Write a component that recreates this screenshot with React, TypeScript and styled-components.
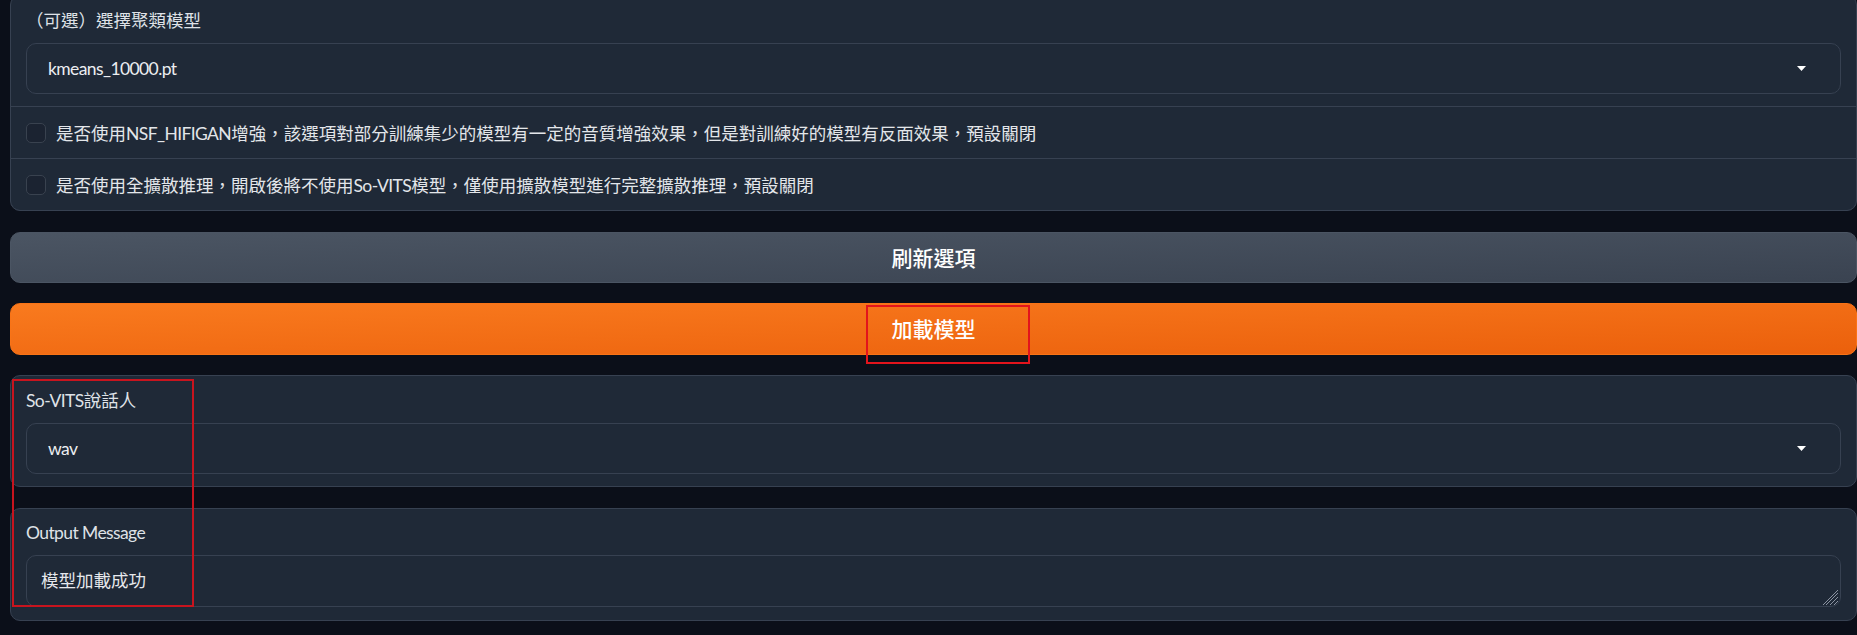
import React from "react";
import styled, { createGlobalStyle } from "styled-components";

const GlobalStyle = createGlobalStyle`
  html, body {
    margin: 0;
    padding: 0;
    background: #0b0f19;
    overflow: hidden;
  }
  body {
    font-family: "Lato", "Noto Sans CJK TC", "Noto Sans", sans-serif;
    color: #e5e7eb;
  }
  * { box-sizing: border-box; }
`;

const Page = styled.div`
  position: relative;
  display: flex;
  flex-direction: column;
  gap: 20.5px;
  margin-top: -5px;
  padding-left: 10px;
  width: 1857px;
  height: 650px;
`;

const Form = styled.div`
  display: flex;
  flex-direction: column;
  gap: 1px;
  background: #374151;
  border: 1px solid #374151;
  border-radius: 10px;
  overflow: hidden;
`;

const Block = styled.div<{ $bordered?: boolean }>`
  background: #1f2937;
  padding: 12.5px 15px;
  ${(p) =>
    p.$bordered
      ? `border: 1px solid #374151; border-radius: 10px;`
      : ``}
`;

const Latin = styled.span`
  letter-spacing: -0.6px;
`;

const Label = styled.div`
  font-size: 17.5px;
  line-height: 24px;
  color: #dfe2e7;
  margin-bottom: 10px;
  white-space: nowrap;
`;

const SelectBox = styled.div`
  display: flex;
  align-items: center;
  justify-content: space-between;
  height: 51px;
  padding: 0 34px 0 21px;
  background: #1f2937;
  border: 1px solid #374151;
  border-radius: 10px;
  font-size: 17.5px;
  color: #eceef1;
`;

const CheckRow = styled(Block)`
  display: flex;
  align-items: center;
  gap: 10px;
  height: 51px;
  font-size: 17.5px;
  color: #e3e6ea;
  white-space: nowrap;
`;

const CheckBox = styled.span`
  flex: none;
  width: 20px;
  height: 20px;
  border-radius: 5px;
  background: #1b2331;
  border: 1px solid #39424f;
`;

const Button = styled.button<{ $primary?: boolean }>`
  height: ${(p) => (p.$primary ? "51.5px" : "51px")};
  width: 100%;
  border-radius: 10px;
  border: 1px solid ${(p) => (p.$primary ? "#f97316" : "#4b5563")};
  background: ${(p) =>
    p.$primary
      ? "linear-gradient(to bottom right, #f97a1e, #eb600c)"
      : "linear-gradient(to bottom right, #4b5563, #3a4351)"};
  color: #ffffff;
  font-family: "Noto Sans CJK TC", sans-serif;
  font-size: 21px;
  font-weight: 500;
  line-height: 1;
  cursor: pointer;
  padding: 0;
`;

const OutputWrap = styled.div`
  position: relative;
`;

const OutputArea = styled.textarea`
  display: block;
  width: 100%;
  height: 52px;
  padding: 12px 14px;
  background: #1f2937;
  border: 1px solid #374151;
  border-radius: 10px;
  resize: none;
  outline: none;
  font-family: "Lato", "Noto Sans CJK TC", sans-serif;
  font-size: 17.5px;
  line-height: 26px;
  color: #e6e8ec;
  overflow: hidden;
`;

const ResizeHandle = styled.svg`
  position: absolute;
  right: 2px;
  bottom: 1px;
  width: 17px;
  height: 17px;
`;

const Highlight = styled.div<{ $x: number; $y: number; $w: number; $h: number; $c: string }>`
  position: absolute;
  left: ${(p) => p.$x}px;
  top: ${(p) => p.$y}px;
  width: ${(p) => p.$w}px;
  height: ${(p) => p.$h}px;
  border: 2px solid ${(p) => p.$c};
  pointer-events: none;
`;

const Arrow = () => (
  <svg width="9" height="5" viewBox="0 0 9 5">
    <path d="M0 0 L9 0 L4.5 5 Z" fill="#ffffff" />
  </svg>
);

export default function App() {
  return (
    <>
      <GlobalStyle />
      <Page>
        <Form>
          <Block>
            <Label>（可選）選擇聚類模型</Label>
            <SelectBox>
              <Latin>kmeans_10000.pt</Latin>
              <Arrow />
            </SelectBox>
          </Block>
          <CheckRow>
            <CheckBox />
            <span>
              是否使用<Latin>NSF_HIFIGAN</Latin>增強，該選項對部分訓練集少的模型有一定的音質增強效果，但是對訓練好的模型有反面效果，預設關閉
            </span>
          </CheckRow>
          <CheckRow>
            <CheckBox />
            <span>
              是否使用全擴散推理，開啟後將不使用<Latin>So-VITS</Latin>模型，僅使用擴散模型進行完整擴散推理，預設關閉
            </span>
          </CheckRow>
        </Form>

        <Button>刷新選項</Button>
        <Button $primary>加載模型</Button>

        <Block $bordered>
          <Label>
            <Latin>So-VITS</Latin>說話人
          </Label>
          <SelectBox>
            <Latin>wav</Latin>
            <Arrow />
          </SelectBox>
        </Block>

        <Block $bordered>
          <Label>
            <Latin>Output Message</Latin>
          </Label>
          <OutputWrap>
            <OutputArea readOnly value="模型加載成功" />
            <ResizeHandle viewBox="0 0 17 17">
              <path
                d="M16 4 L4 16 M16 8 L8 16 M16 12 L12 16 M16 1 L1 16"
                stroke="#8b93a1"
                strokeWidth="1"
                fill="none"
              />
            </ResizeHandle>
          </OutputWrap>
        </Block>

        <Highlight $x={866} $y={310} $w={164} $h={59} $c="#e3141c" />
        <Highlight $x={12} $y={384} $w={182} $h={228} $c="#c8141e" />
      </Page>
    </>
  );
}
